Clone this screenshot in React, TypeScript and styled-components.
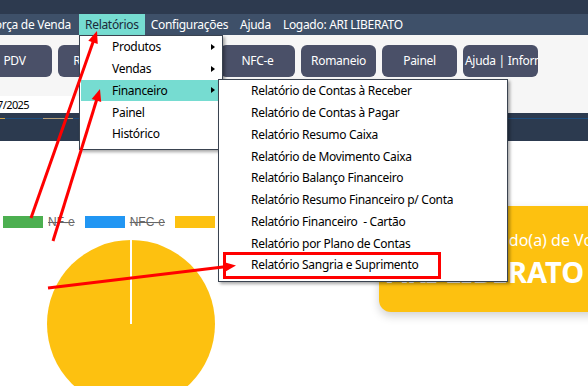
import React from "react";
import styled, { createGlobalStyle } from "styled-components";

const GlobalStyle = createGlobalStyle`
  html, body { margin: 0; padding: 0; background: #ffffff; }
  body { width: 588px; height: 386px; overflow: hidden; }
  * { box-sizing: border-box; }
`;

const UI = `"Segoe UI", "Noto Sans", "Open Sans", sans-serif`;

const Screen = styled.div`
  position: relative;
  width: 588px;
  height: 386px;
  overflow: hidden;
  font-family: ${UI};
  background: #ffffff;
`;

const TopStrip = styled.div`
  height: 14px;
  background: #2d3a4f;
`;

const MenuBar = styled.div`
  position: relative;
  z-index: 5;
  height: 21px;
  display: flex;
  align-items: stretch;
  white-space: nowrap;
  background: #3e5069;
  letter-spacing: -0.3px;
`;

const ScrolledOut = styled.div`
  flex: none;
  width: 79px;
  padding-right: 2px;
  display: flex;
  justify-content: flex-end;
  overflow: hidden;
`;

const MenuItem = styled.div<{ $active?: boolean }>`
  position: relative;
  flex: none;
  display: flex;
  align-items: center;
  padding: 0 6px;
  font-size: 12px;
  color: ${(p) => (p.$active ? "#1b2a3a" : "#ffffff")};
  background: ${(p) => (p.$active ? "#76dcd1" : "transparent")};
`;

const Dropdown = styled.div`
  position: absolute;
  top: 21px;
  left: 0;
  width: 144px;
  padding: 0 1px 4px 1px;
  background: #ffffff;
  border: 1px solid #3a4350;
  box-shadow: 2px 2px 3px rgba(0, 0, 0, 0.35);
  color: #000000;
  font-size: 12px;
`;

const DropItem = styled.div<{ $hl?: boolean }>`
  height: 21.75px;
  display: flex;
  align-items: center;
  justify-content: space-between;
  padding: 0 6px 0 31px;
  background: ${(p) => (p.$hl ? "#76dcd1" : "transparent")};
  white-space: pre;
`;

const SubArrow = styled.span`
  width: 0;
  height: 0;
  border-left: 4px solid #000000;
  border-top: 3.5px solid transparent;
  border-bottom: 3.5px solid transparent;
`;

const SubMenu = styled.div`
  position: absolute;
  top: 43px;
  left: 138px;
  width: 290px;
  padding: 0 1px 5px 1px;
  background: #ffffff;
  border: 1px solid #3a4350;
  box-shadow: 2px 2px 3px rgba(0, 0, 0, 0.35);
  z-index: 2;
`;

const SubItem = styled.div`
  height: 21.75px;
  display: flex;
  align-items: center;
  padding-left: 31px;
  white-space: pre;
`;

const Toolbar = styled.div`
  height: 78px;
  padding-top: 10px;
  background: #f6f6f6;
  display: flex;
  flex-direction: column;
  letter-spacing: -0.3px;
`;

const ButtonRow = styled.div`
  display: flex;
  gap: 6px;
  margin-left: -23px;
`;

const ToolButton = styled.div`
  flex: none;
  width: 75px;
  height: 32px;
  padding: 0 2px;
  border-radius: 6px;
  background: #4a5068;
  color: #ffffff;
  font-size: 12px;
  line-height: 32px;
  text-align: center;
  white-space: nowrap;
  overflow: hidden;
`;

const DateField = styled.div`
  margin-top: 19px;
  width: 90px;
  height: 17px;
  background: #ffffff;
  display: flex;
`;

const DateClip = styled.div`
  width: 30px;
  display: flex;
  justify-content: flex-end;
  align-items: center;
  overflow: hidden;
  padding-right: 1px;
  font-size: 11px;
  letter-spacing: -0.6px;
  color: #000000;
  white-space: nowrap;
`;

const DarkBand = styled.div`
  height: 28px;
  padding-top: 5px;
  background: #2c3a4f;
`;

const Track = styled.div`
  display: flex;
  height: 1px;
`;

const TrackSeg = styled.div<{ $w?: number; $c: string }>`
  flex: ${(p) => (p.$w ? `0 0 ${p.$w}px` : "1 1 auto")};
  background: ${(p) => p.$c};
`;

const Content = styled.div`
  display: flex;
  align-items: flex-start;
`;

const ChartCol = styled.div`
  flex: 0 0 379px;
  padding: 75px 0 0 3px;
  display: flex;
  flex-direction: column;
`;

const Legend = styled.div`
  display: flex;
  align-items: center;
  height: 12px;
`;

const LegendBox = styled.div<{ $c: string }>`
  width: 40px;
  height: 12px;
  background: ${(p) => p.$c};
`;

const LegendLabel = styled.span`
  margin: 0 10px 0 5px;
  font-family: "Liberation Sans", Arial, sans-serif;
  font-size: 12px;
  line-height: 12px;
  color: #666666;
  text-decoration: line-through;
`;

const PieWrap = styled.div`
  margin: 12px 0 0 44px;
  width: 168px;
  height: 168px;
`;

const CardCol = styled.div`
  padding-top: 65px;
`;

const Card = styled.div`
  width: 330px;
  height: 106px;
  border-radius: 12px;
  background: #fdc110;
  box-shadow: 0 4px 10px rgba(0, 0, 0, 0.18);
  padding: 24px 0 0 8px;
  display: flex;
  flex-direction: column;
  color: #ffffff;
  white-space: nowrap;
`;

const CardLine = styled.div`
  font-size: 16px;
  line-height: 20px;
`;

const CardName = styled.div`
  margin-top: 5px;
  font-size: 29px;
  line-height: 34px;
  font-weight: 700;
`;

const Overlay = styled.svg`
  position: absolute;
  top: 0;
  left: 0;
  z-index: 20;
  pointer-events: none;
`;

function Arrow({ x1, y1, x2, y2 }: { x1: number; y1: number; x2: number; y2: number }) {
  const dx = x2 - x1;
  const dy = y2 - y1;
  const L = Math.hypot(dx, dy);
  const ux = dx / L;
  const uy = dy / L;
  const len = 12;
  const half = 5;
  const bx = x2 - ux * len;
  const by = y2 - uy * len;
  const px = -uy * half;
  const py = ux * half;
  return (
    <g>
      <line x1={x1} y1={y1} x2={bx + ux * 1} y2={by + uy * 1} stroke="#ff0000" strokeWidth={3} />
      <polygon points={`${x2},${y2} ${bx + px},${by + py} ${bx - px},${by - py}`} fill="#ff0000" />
    </g>
  );
}

const submenuItems = [
  "Relatório de Contas à Receber",
  "Relatório de Contas à Pagar",
  "Relatório Resumo Caixa",
  "Relatório de Movimento Caixa",
  "Relatório Balanço Financeiro",
  "Relatório Resumo Financeiro p/ Conta",
  "Relatório Financeiro  - Cartão",
  "Relatório por Plano de Contas",
  "Relatório Sangria e Suprimento",
];

export default function App() {
  return (
    <Screen>
      <GlobalStyle />
      <TopStrip />
      <MenuBar>
        <ScrolledOut>
          <MenuItem>Força de Venda</MenuItem>
        </ScrolledOut>
        <MenuItem $active>
          Relatórios
          <Dropdown>
            <DropItem>
              Produtos
              <SubArrow />
            </DropItem>
            <DropItem>
              Vendas
              <SubArrow />
            </DropItem>
            <DropItem $hl>
              Financeiro
              <SubArrow />
            </DropItem>
            <DropItem>Painel</DropItem>
            <DropItem>Histórico</DropItem>
            <SubMenu>
              {submenuItems.map((t) => (
                <SubItem key={t}>{t}</SubItem>
              ))}
            </SubMenu>
          </Dropdown>
        </MenuItem>
        <MenuItem>Configurações</MenuItem>
        <MenuItem>Ajuda</MenuItem>
        <MenuItem>Logado: ARI LIBERATO</MenuItem>
      </MenuBar>
      <Toolbar>
        <ButtonRow>
          <ToolButton>PDV</ToolButton>
          <ToolButton>Receitas</ToolButton>
          <ToolButton>Vendas</ToolButton>
          <ToolButton>NFC-e</ToolButton>
          <ToolButton>Romaneio</ToolButton>
          <ToolButton>Painel</ToolButton>
          <ToolButton>Ajuda | Informações</ToolButton>
        </ButtonRow>
        <DateField>
          <DateClip>01/07/2025</DateClip>
        </DateField>
      </Toolbar>
      <DarkBand>
        <Track>
          <TrackSeg $w={5} $c="#c9a04a" />
          <TrackSeg $w={38} $c="#1c4d7e" />
          <TrackSeg $w={30} $c="#b5a07a" />
          <TrackSeg $c="#1c4d7e" />
        </Track>
      </DarkBand>
      <Content>
        <ChartCol>
          <Legend>
            <LegendBox $c="#4caf50" />
            <LegendLabel>NF-e</LegendLabel>
            <LegendBox $c="#2196f3" />
            <LegendLabel>NFC-e</LegendLabel>
            <LegendBox $c="#fdc110" />
            <LegendLabel>Outros</LegendLabel>
          </Legend>
          <PieWrap>
            <svg width="168" height="168" viewBox="0 0 168 168">
              <circle cx="84" cy="84" r="84" fill="#fdc110" />
              <line x1="84" y1="0" x2="84" y2="84" stroke="#ffffff" strokeWidth="2" />
            </svg>
          </PieWrap>
        </ChartCol>
        <CardCol>
          <Card>
            <CardLine>Oi, Seja Bem-vindo(a) de Volta,</CardLine>
            <CardName>ARI LIBERATO</CardName>
          </Card>
        </CardCol>
      </Content>
      <Overlay width="588" height="386" viewBox="0 0 588 386">
        <Arrow x1={31} y1={218} x2={97} y2={31} />
        <Arrow x1={53} y1={241} x2={100} y2={89} />
        <Arrow x1={48} y1={288} x2={236} y2={265.5} />
        <rect x={224.5} y={253.5} width={215} height={24} fill="none" stroke="#ff0000" strokeWidth={3} />
      </Overlay>
    </Screen>
  );
}
